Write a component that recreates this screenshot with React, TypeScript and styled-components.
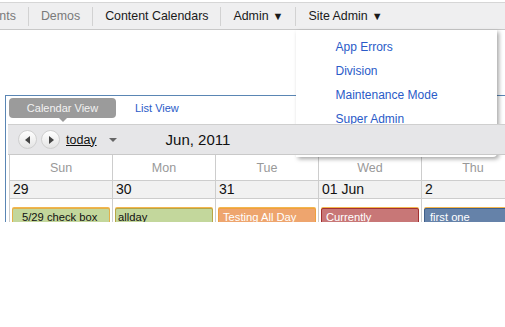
import React from 'react';
import styled, { createGlobalStyle } from 'styled-components';

const GlobalStyle = createGlobalStyle`
  html, body {
    margin: 0;
    padding: 0;
    background: #fff;
    font-family: "Liberation Sans", Arial, sans-serif;
    overflow: hidden;
  }
`;

const Page = styled.div`
  position: relative;
  width: 505px;
  height: 327px;
  overflow: hidden;
`;

const NavBar = styled.div`
  margin-top: 2px;
  height: 26px;
  display: flex;
  align-items: center;
  background: #efeff0;
  border-top: 1px solid #d6d6d6;
  border-bottom: 1px solid #c8c8c8;
  white-space: nowrap;
`;

const NavItem = styled.div<{ $muted?: boolean; $first?: boolean }>`
  position: relative;
  height: 100%;
  display: flex;
  align-items: center;
  padding: 0 12px;
  margin-left: ${({ $first }) => ($first ? '-34px' : '0')};
  font-size: 12.4px;
  color: ${({ $muted }) => ($muted ? '#7a7a7a' : '#1a1a1a')};
`;

const NavSep = styled.div`
  width: 1px;
  height: 19px;
  background: #d2d2d2;
`;

const Caret = styled.span`
  font-size: 11px;
  margin-left: 4px;
`;

const Dropdown = styled.div`
  position: absolute;
  left: 0;
  top: 27px;
  width: 201px;
  height: 127px;
  background: #fff;
  border-bottom-right-radius: 4px;
  box-shadow: 2px 2px 4px rgba(0, 0, 0, 0.35);
  padding-top: 5px;
  box-sizing: border-box;
  z-index: 5;
`;

const MenuLink = styled.div`
  padding-left: 39px;
  height: 24px;
  line-height: 24px;
  font-size: 12px;
  color: #2a5bc8;
`;

const Calendar = styled.div`
  margin: 65px 0 0 5px;
  height: 126px;
  border-top: 1px solid #5a86b4;
  border-left: 1px solid #5a86b4;
  padding-left: 2px;
  overflow: hidden;
`;

const Tabs = styled.div`
  height: 27px;
  display: flex;
  align-items: flex-start;
  padding: 2px 0 0 1px;
  box-sizing: border-box;
`;

const ActiveTab = styled.div`
  position: relative;
  width: 107px;
  height: 20px;
  border-radius: 4px;
  background: #9b9b9b;
  color: #f2f2f2;
  font-size: 11px;
  display: flex;
  align-items: center;
  justify-content: center;

  &::after {
    content: '';
    position: absolute;
    left: 50%;
    bottom: -4px;
    margin-left: -4px;
    border-left: 4px solid transparent;
    border-right: 4px solid transparent;
    border-top: 4px solid #9b9b9b;
  }
`;

const Tab = styled.div`
  margin-left: 19px;
  height: 20px;
  display: flex;
  align-items: center;
  font-size: 11px;
  color: #2a5bc8;
`;

const Toolbar = styled.div`
  position: relative;
  z-index: 6;
  margin-top: 1px;
  height: 29px;
  width: 600px;
  display: flex;
  align-items: center;
  padding-left: 10px;
  background: #e6e6e8;
  border-top: 1px solid #cfcfcf;
  border-bottom: 1px solid #c9c9c9;
`;

const RoundButton = styled.div<{ $dir: 'left' | 'right' }>`
  width: 19px;
  height: 19px;
  box-sizing: border-box;
  border-radius: 50%;
  border: 1px solid #cfcfcf;
  background: linear-gradient(#ffffff, #e4e4e4);
  margin-right: 4px;
  display: flex;
  align-items: center;
  justify-content: center;

  &::before {
    content: '';
    border-top: 4px solid transparent;
    border-bottom: 4px solid transparent;
    ${({ $dir }) =>
      $dir === 'left'
        ? 'border-right: 5px solid #444; margin-left: -1px;'
        : 'border-left: 5px solid #444; margin-left: 1px;'}
  }
`;

const Today = styled.span`
  margin-left: 2px;
  font-size: 12.5px;
  color: #111;
  text-decoration: underline;
`;

const DownCaret = styled.span`
  margin-left: 12px;
  border-left: 4px solid transparent;
  border-right: 4px solid transparent;
  border-top: 4px solid #666;
`;

const MonthTitle = styled.span`
  margin-left: 49px;
  font-size: 15px;
  color: #111;
`;

const Row = styled.div<{ $bg: string; $h: number }>`
  display: grid;
  grid-template-columns: repeat(7, 103px);
  height: ${({ $h }) => $h}px;
  background: ${({ $bg }) => $bg};
  border-bottom: 1px solid #cdcdcd;
  margin-left: 1px;
`;

const HeadCell = styled.div`
  border-left: 1px solid #cdcdcd;
  display: flex;
  align-items: center;
  justify-content: center;
  font-size: 12.5px;
  color: #999;
`;

const DateCell = styled.div`
  border-left: 1px solid #cdcdcd;
  padding-left: 3px;
  font-size: 14px;
  line-height: 17px;
  color: #111;
`;

const EventCell = styled.div`
  border-left: 1px solid #cdcdcd;
  padding: 9px 2px 0 2px;
`;

const EventBar = styled.div<{ $bg: string; $border: string; $fg: string; $pad: number }>`
  position: relative;
  height: 22px;
  box-sizing: border-box;
  background: ${({ $bg }) => $bg};
  border: 1px solid ${({ $border }) => $border};
  box-shadow: 0 -1px 0 #f3b64d;
  border-radius: 2px;
  color: ${({ $fg }) => $fg};
  font-size: 11.2px;
  line-height: 14px;
  padding: 1px 0 0 ${({ $pad }) => $pad}px;
  white-space: nowrap;
  overflow: hidden;
`;

const Marker = styled.span`
  position: absolute;
  left: 1px;
  bottom: 2px;
  border-left: 3px solid #e49a2a;
  border-top: 3px solid transparent;
`;

const days = ['Sun', 'Mon', 'Tue', 'Wed', 'Thu', 'Fri', 'Sat'];
const dates = ['29', '30', '31', '01 Jun', '2', '3', '4'];

const events = [
  { title: '5/29 check box', bg: '#c3d79c', border: '#e2b04a', fg: '#111', pad: 9, marker: true },
  { title: 'allday', bg: '#c3d79c', border: '#b7a545', fg: '#111', pad: 2 },
  { title: 'Testing All Day', bg: '#eea56e', border: '#f0a040', fg: '#fff', pad: 4 },
  { title: 'Currently', bg: '#c87777', border: '#a33030', fg: '#fff', pad: 4 },
  { title: 'first one', bg: '#6582a9', border: '#3f5f8a', fg: '#fff', pad: 5 },
];

const App: React.FC = () => {
  return (
    <Page>
      <GlobalStyle />
      <NavBar>
        <NavItem $muted $first>Events</NavItem>
        <NavSep />
        <NavItem $muted>Demos</NavItem>
        <NavSep />
        <NavItem>Content Calendars</NavItem>
        <NavSep />
        <NavItem>
          Admin<Caret>▼</Caret>
        </NavItem>
        <NavSep />
        <NavItem>
          Site Admin<Caret>▼</Caret>
          <Dropdown>
            <MenuLink>App Errors</MenuLink>
            <MenuLink>Division</MenuLink>
            <MenuLink>Maintenance Mode</MenuLink>
            <MenuLink>Super Admin</MenuLink>
          </Dropdown>
        </NavItem>
      </NavBar>

      <Calendar>
        <Tabs>
          <ActiveTab>Calendar View</ActiveTab>
          <Tab>List View</Tab>
        </Tabs>
        <Toolbar>
          <RoundButton $dir="left" />
          <RoundButton $dir="right" />
          <Today>today</Today>
          <DownCaret />
          <MonthTitle>Jun, 2011</MonthTitle>
        </Toolbar>
        <Row $bg="#fff" $h={25}>
          {days.map((d) => (
            <HeadCell key={d}>{d}</HeadCell>
          ))}
        </Row>
        <Row $bg="#f1f1f1" $h={17}>
          {dates.map((d) => (
            <DateCell key={d}>{d}</DateCell>
          ))}
        </Row>
        <Row $bg="#fff" $h={40}>
          {days.map((d, i) => {
            const ev = events[i];
            return (
              <EventCell key={d}>
                {ev && (
                  <EventBar $bg={ev.bg} $border={ev.border} $fg={ev.fg} $pad={ev.pad}>
                    {ev.marker && <Marker />}
                    {ev.title}
                  </EventBar>
                )}
              </EventCell>
            );
          })}
        </Row>
      </Calendar>
    </Page>
  );
};

export default App;
